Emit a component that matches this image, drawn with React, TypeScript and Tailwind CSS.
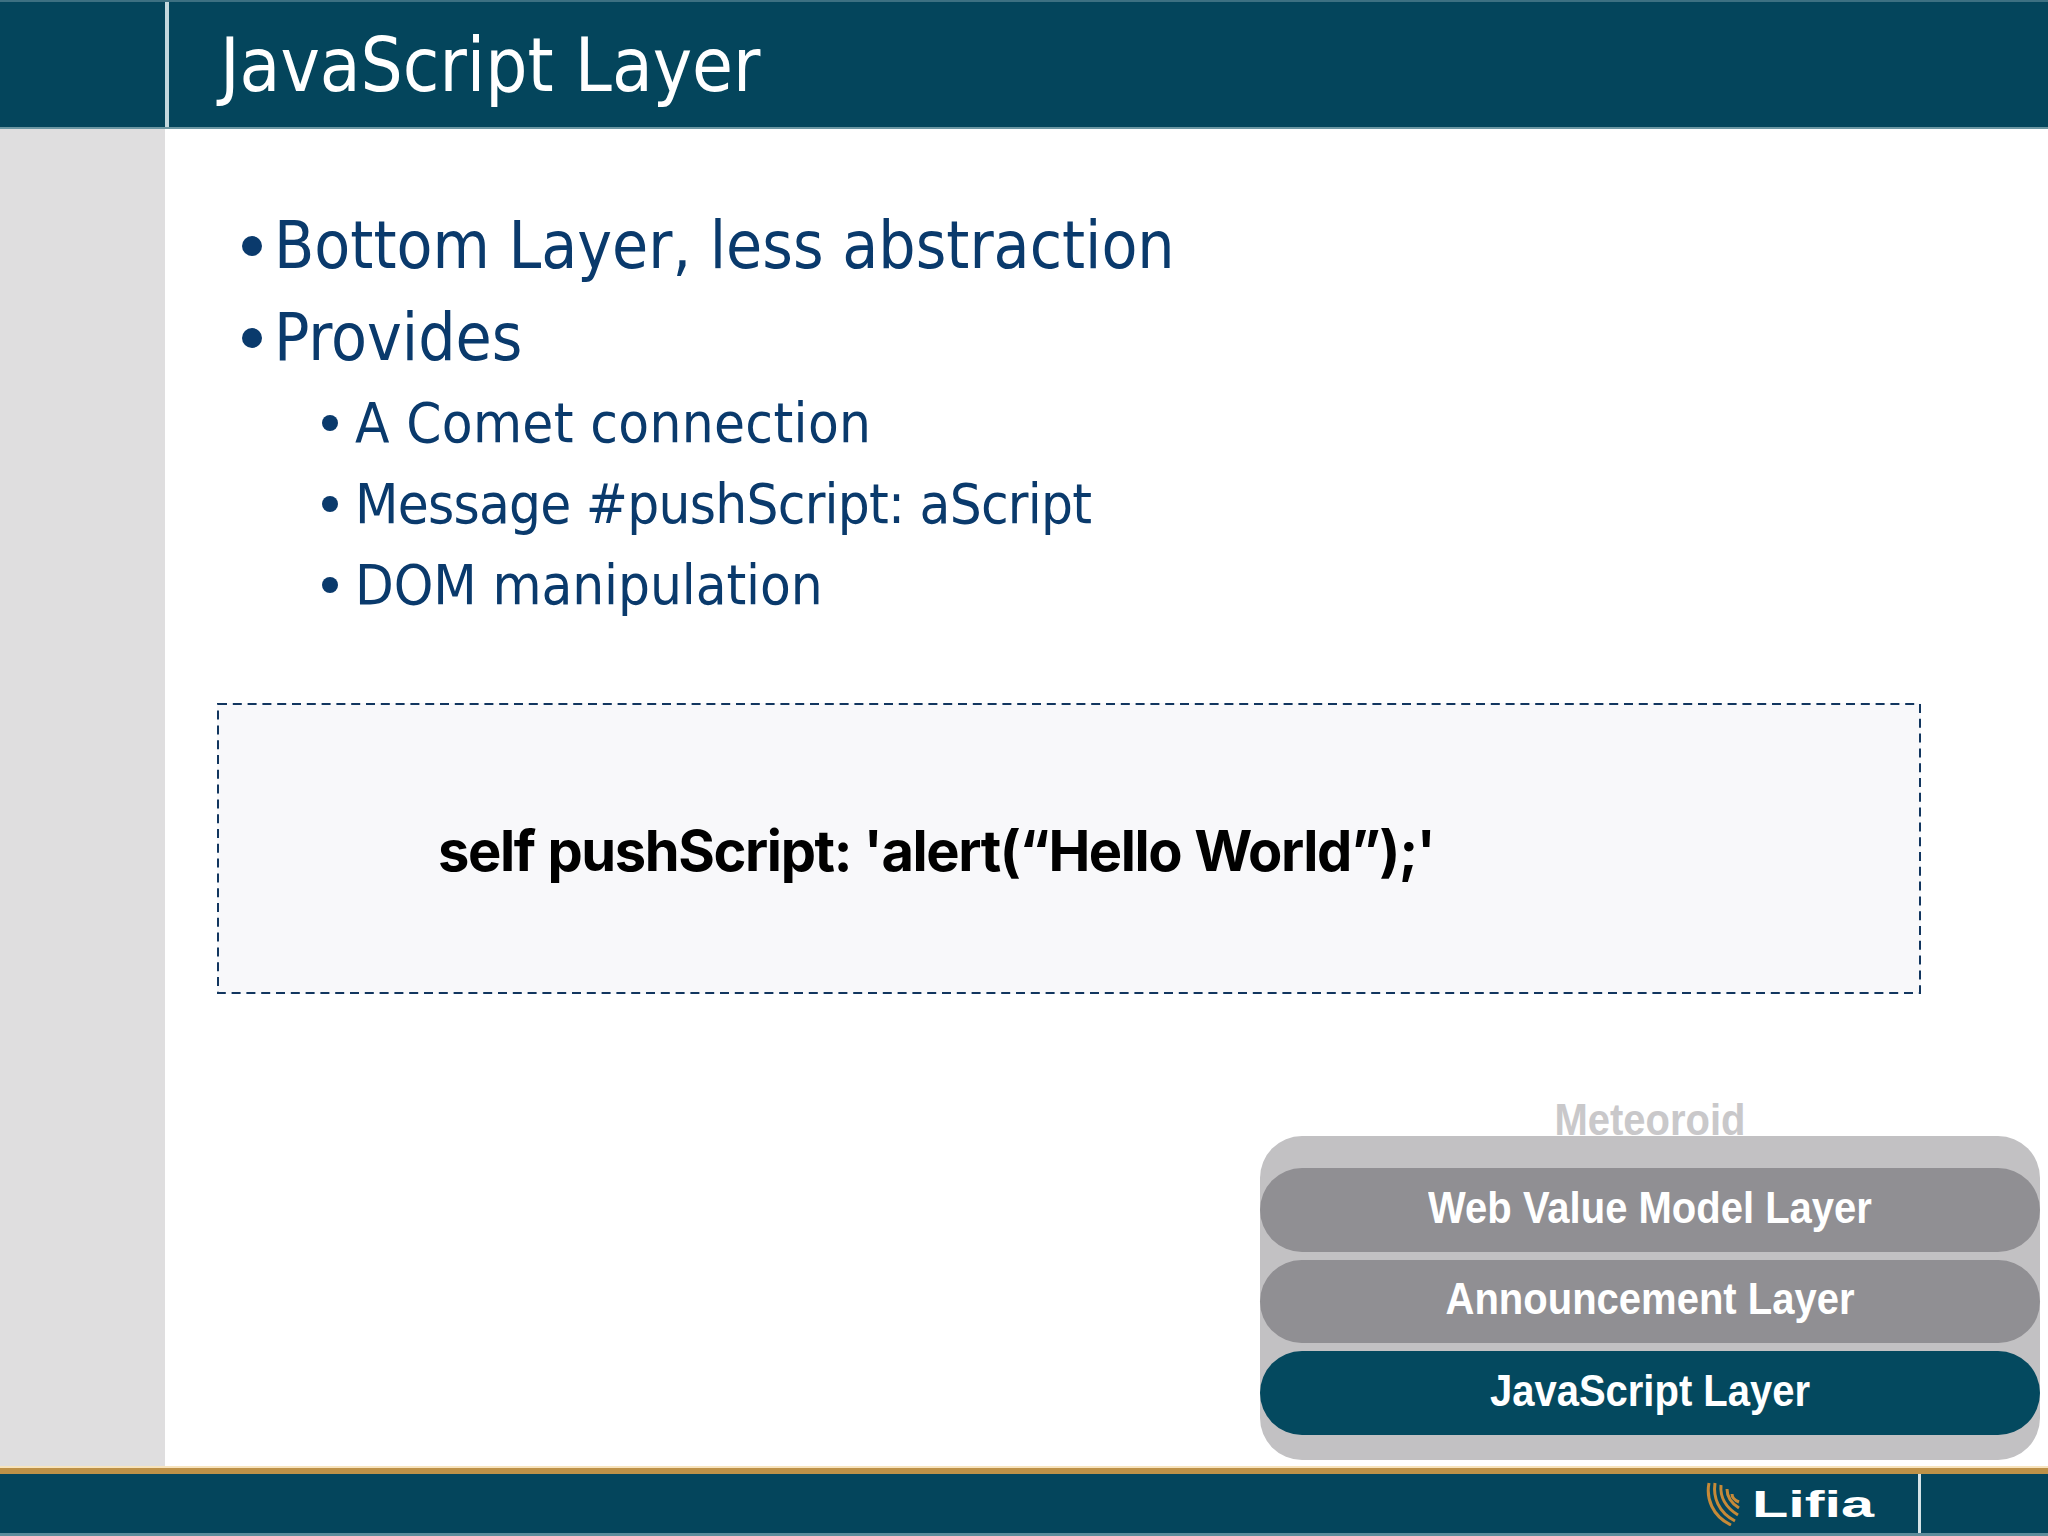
const bodyFont = "font-['DejaVu_Sans_Condensed','DejaVu_Sans',sans-serif]"

function Bullet({ text }: { text: string }) {
  return (
    <div className="ml-[25px] flex h-[92px] items-center">
      <span className="mr-[12px] h-[20px] w-[20px] rounded-full bg-[#0a3a6c]" />
      <span className="text-[65.4px] leading-none text-[#0a3a6c]">{text}</span>
    </div>
  )
}

function SubBullet({ text, tracking }: { text: string; tracking: string }) {
  return (
    <div className="ml-[105px] flex h-[81px] items-center">
      <span className="mr-[17px] h-[16px] w-[16px] rounded-full bg-[#0a3a6c]" />
      <span className={`text-[56px] leading-none text-[#0a3a6c] ${tracking}`}>{text}</span>
    </div>
  )
}

function StackBar({ label, dark, height }: { label: string; dark?: boolean; height: string }) {
  return (
    <div
      className={`flex items-center justify-center rounded-[42px] pb-[5px] text-[40px] font-bold text-white ${height} ${
        dark ? 'bg-[#04495f]' : 'bg-[#908f93]'
      }`}
    >
      <span className="scale-y-[1.1]">{label}</span>
    </div>
  )
}

export default function App() {
  return (
    <div className={`flex h-[1536px] w-[2048px] flex-col overflow-hidden bg-white ${bodyFont}`}>
      <header className="flex h-[129px] shrink-0 border-t-2 border-b-2 border-t-[#3d7082] border-b-[#6d97a3] bg-[#04455c]">
        <div className="w-[165px] shrink-0" />
        <div className="w-[4px] shrink-0 bg-[#c3d8de]" />
        <h1 className="pl-[51px] text-[74px] leading-[127px] text-white">JavaScript Layer</h1>
      </header>

      <div className="flex min-h-0 flex-1">
        <aside className="w-[165px] shrink-0 bg-[#dfdedf]" />
        <main className="relative min-w-0 flex-1 pl-[52px]">
          <div className="pt-[71px]">
            <Bullet text="Bottom Layer, less abstraction" />
            <Bullet text="Provides" />
            <div className="-mt-[2px]">
              <SubBullet text="A Comet connection" tracking="tracking-[0.36px]" />
              <SubBullet text="Message #pushScript: aScript" tracking="tracking-[-0.75px]" />
              <SubBullet text="DOM manipulation" tracking="tracking-[-0.1px]" />
            </div>
          </div>

          <div className="relative mt-[78px] flex h-[291px] w-[1704px] items-center bg-[#f8f8fa] pt-[5px] pl-[221px]">
            <svg className="absolute inset-0 h-[291px] w-[1704px]" fill="none">
              <rect x="1" y="1" width="1702" height="289" stroke="#12365f" strokeWidth="2" strokeDasharray="9 5.8" />
            </svg>
            <span className="font-['Inter',sans-serif] text-[56px] font-bold tracking-[-1.4px] text-black [word-spacing:1px]">
              self pushScript: 'alert(“Hello World”);'
            </span>
          </div>

          <div className="absolute right-[8px] bottom-[8px] w-[780px] font-['Liberation_Sans',sans-serif]">
            <div className="absolute -top-[38px] w-full text-center text-[40px] leading-[44px] font-bold text-[#c9c8ca]">
              <span className="inline-block scale-y-[1.1]">Meteoroid</span>
            </div>
            <div className="relative flex h-[324px] flex-col gap-[8px] rounded-[42px] bg-[#c2c1c3] pt-[32px]">
              <StackBar height="h-[84px]" label="Web Value Model Layer" />
              <StackBar height="h-[83px]" label="Announcement Layer" />
              <StackBar height="h-[84px]" dark label="JavaScript Layer" />
            </div>
          </div>
        </main>
      </div>

      <footer className="relative flex h-[68px] shrink-0 border-t-[6px] border-b-[3px] border-t-[#bd9148] border-b-[#5d8c9b] bg-[#04455c] shadow-[0_-2px_0_#f7e3bd]">
        <div className="flex flex-1 items-center justify-end pr-[42px]">
          <svg viewBox="0 0 34 44" className="mr-[12px] h-[44px] w-[34px]" fill="none" stroke="#c68a38" strokeWidth="3">
            <path d="M3 1C0 16 6 34 25 43" />
            <path d="M9 1C7 15 12 30 29 39" />
            <path d="M15 3C14 14 19 25 32 33" />
            <path d="M21 7C21 14 25 21 33 26" />
            <path d="M26 12C26 15 28 18 33 20" />
          </svg>
          <span className="w-[124px] origin-left scale-x-[1.65] scale-y-[1.05] font-['Liberation_Sans',sans-serif] text-[36px] leading-none font-bold text-white">
            Lifia
          </span>
        </div>
        <div className="w-[3px] shrink-0 bg-[#d5e3e7]" />
        <div className="w-[127px] shrink-0" />
      </footer>
    </div>
  )
}
